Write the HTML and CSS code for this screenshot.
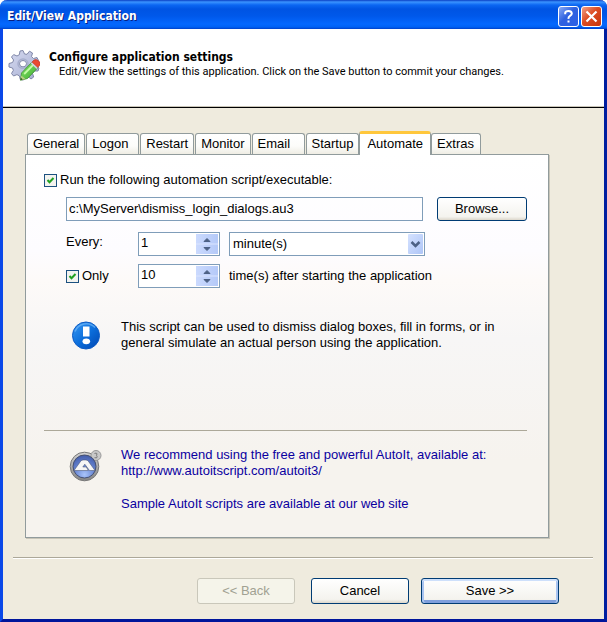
FILE: index.html
```html
<!DOCTYPE html>
<html lang="en">
<head>
<meta charset="utf-8">
<title>Edit/View Application</title>
<link rel="stylesheet" href="styles.css">
</head>
<body>
<div class="window">
  <header class="titlebar">
    <h1 class="title">Edit/View Application</h1>
    <button class="sys sys-help" type="button" aria-label="Help">
      <svg width="19" height="19" viewBox="0 0 19 19"><path d="M6.2 7.2V5.8Q6.5 4 9.5 4T12.8 6.4Q12.8 7.8 11 8.9T9.5 11.8M9.5 13.6V15.6" fill="none" stroke="#fff" stroke-width="2"/></svg>
    </button>
    <button class="sys sys-close" type="button" aria-label="Close">
      <svg width="19" height="19" viewBox="0 0 19 19"><path d="M4.5 4.5L14.5 14.5M14.5 4.5L4.5 14.5" fill="none" stroke="#fff" stroke-width="2.2"/></svg>
    </button>
  </header>

  <section class="banner">
    <svg class="banner-icon" width="32" height="32" viewBox="0 0 32 32">
      <defs>
        <linearGradient id="gear" x1="0" y1="0" x2="1" y2="1"><stop offset="0" stop-color="#d6daf0"/><stop offset="1" stop-color="#a3abd0"/></linearGradient>
        <linearGradient id="pencil" x1="0" y1="0" x2="1" y2="1"><stop offset="0" stop-color="#8eea6c"/><stop offset="1" stop-color="#37a82e"/></linearGradient>
      </defs>
      <path fill="url(#gear)" stroke="#8087a8" stroke-width="1" stroke-linejoin="round" fill-rule="evenodd" d="M12 2L15 1.500L16.500 5L19 5.300L21.500 2.200L24.500 4L23.500 7.500L25.500 9.500L29 8.500L30.500 11.500L27.500 14L28 17L31 19L30 22L26.300 22L24.500 24.500L25.700 28L23 30L20 27.500L17 28.200L15.500 31L12.300 30.500L11.500 27L9 25.600L5.600 27L3.500 24.500L5.400 21.300L4.500 19L1 18L1 14.500L4.600 13.500L5.600 11L3.500 8L5.700 5.600L9 7L11.400 5.600ZM15 11.500A3.500 3.200 0 1 0 15 17.900A3.500 3.200 0 1 0 15 11.500Z"/>
      <ellipse cx="15" cy="14.700" rx="5" ry="4.600" fill="none" stroke="#a7aecd" stroke-width="1.500"/>
      <path d="M13.500 24L24 13L30 18.500L19.500 29.500L12.500 31.200Z" fill="url(#pencil)" stroke="#3d8f30" stroke-width=".8"/>
      <path d="M16.200 25L26.200 14.800" stroke="#c4fca6" stroke-width="1.800"/>
      <path d="M13.300 26.500L17.500 30L12.500 31.200Z" fill="#b8cf80"/>
      <path d="M12.900 28.800L14.800 30.400L12.300 31.300Z" fill="#2e5a1e"/>
      <path d="M22.700 14.400L24.500 12.500L30.400 18L28.600 19.900Z" fill="#cfd0dc"/>
      <path d="M24 13L26 11Q28.500 9.800 31 12.200T31.500 16.500L29.900 18.500Z" fill="#ea4a31" stroke="#b7301e" stroke-width=".6"/>
    </svg>
    <div class="banner-text">
      <h2 class="banner-title">Configure application settings</h2>
      <p class="banner-sub">Edit/View the settings of this application. Click on the Save button to commit your changes.</p>
    </div>
  </section>

  <main class="main">
    <div class="tabs" role="tablist">
      <button class="tab" type="button" role="tab">General</button>
      <button class="tab" type="button" role="tab">Logon</button>
      <button class="tab" type="button" role="tab">Restart</button>
      <button class="tab" type="button" role="tab">Monitor</button>
      <button class="tab" type="button" role="tab">Email</button>
      <button class="tab" type="button" role="tab">Startup</button>
      <button class="tab tab-active" type="button" role="tab" aria-selected="true">Automate</button>
      <button class="tab tab-last" type="button" role="tab">Extras</button>
    </div>

    <form class="panel" role="tabpanel">
      <div class="check-row">
        <input class="check" type="checkbox" id="run" checked>
        <label for="run">Run the following automation script/executable:</label>
      </div>

      <div class="fields">
        <div class="path-row">
          <input class="field path" type="text" aria-label="Script path" value="c:\MyServer\dismiss_login_dialogs.au3">
          <button class="btn browse" type="button">Browse...</button>
        </div>
        <div class="grid">
          <label class="every" for="every">Every:</label>
          <div class="spin">
            <input class="spin-input" type="text" id="every" value="1">
            <span class="spin-btns"><svg width="22" height="20" viewBox="0 0 22 20"><path d="M8 7.500L11 4.500L14 7.500ZM8 13.500L11 16.500L14 13.500Z" fill="#4d6185" stroke="#4d6185"/><path d="M0 10H22" stroke="#dbe5fe"/></svg></span>
          </div>
          <select class="field select" aria-label="Unit"><option>minute(s)</option></select>
          <div class="check-cell">
            <input class="check" type="checkbox" id="only" checked>
            <label for="only">Only</label>
          </div>
          <div class="spin">
            <input class="spin-input" type="text" aria-label="Number of times" value="10">
            <span class="spin-btns"><svg width="22" height="20" viewBox="0 0 22 20"><path d="M8 7.500L11 4.500L14 7.500ZM8 13.500L11 16.500L14 13.500Z" fill="#4d6185" stroke="#4d6185"/><path d="M0 10H22" stroke="#dbe5fe"/></svg></span>
          </div>
          <span class="times">time(s) after starting the application</span>
        </div>
      </div>

      <div class="note">
        <svg class="note-icon" width="32" height="32" viewBox="0 0 32 32">
          <defs><linearGradient id="info" x1="0" y1="0" x2="1" y2="1"><stop offset="0" stop-color="#3a98f2"/><stop offset=".5" stop-color="#0c6fdc"/><stop offset="1" stop-color="#0045b0"/></linearGradient></defs>
          <circle cx="16" cy="16.500" r="13.500" fill="url(#info)" stroke="#0b5ac4"/>
          <path d="M5 12.500A12 12 0 0 1 25 8.500" fill="none" stroke="#7cc0fb" stroke-opacity=".6" stroke-width="1.500"/>
          <path d="M13 7.500H19.500V17.500H13Z" fill="#fff"/>
          <ellipse cx="16.300" cy="22.300" rx="3.800" ry="2.900" fill="#fff"/>
        </svg>
        <p class="note-text">This script can be used to dismiss dialog boxes, fill in forms, or in general simulate an actual person using the application.</p>
      </div>

      <div class="note links">
        <svg class="note-icon" width="36" height="36" viewBox="0 -2 36 36">
          <defs>
            <radialGradient id="orb" cx=".5" cy=".85" r=".9"><stop offset="0" stop-color="#a9c4fa"/><stop offset=".5" stop-color="#6684d2"/><stop offset="1" stop-color="#3f57a4"/></radialGradient>
            <linearGradient id="ring" x1="0" y1="0" x2="0" y2="1"><stop offset="0" stop-color="#d2d2d2"/><stop offset="1" stop-color="#858585"/></linearGradient>
          </defs>
          <circle cx="16.500" cy="17.500" r="14.300" fill="url(#ring)" stroke="#777"/>
          <circle cx="28" cy="6.500" r="5" fill="#c8c8c8" stroke="#999"/>
          <circle cx="16.500" cy="17.500" r="11.500" fill="url(#orb)" stroke="#46506f"/>
          <path d="M6.500 22L13.300 12.500Q16.500 9.500 19.700 12.500L26.500 22H21.500L16.500 15L14 18.200H18L20.500 22Z" fill="none"/>
          <path fill-rule="evenodd" d="M6 21.500L12.500 12.500Q13.500 11 15 11H18Q19.500 11 20.500 12.500L27 21.500H21.500L16.800 15.200L14.800 18H18.300L20.300 21.500Z" fill="#f6f6f6" stroke="#3d4663" stroke-width=".5"/>
          <path d="M26.500 4.500Q30 3.300 28.500 6.300Q30.500 9.500 26.500 8.700" fill="none" stroke="#777"/>
        </svg>
        <div class="note-text">
          <p class="para"><a class="link" href="#autoit">We recommend using the free and powerful AutoIt, available at:<br>http://www.autoitscript.com/autoit3/</a></p>
          <p class="para"><a class="link" href="#samples">Sample AutoIt scripts are available at our web site</a></p>
        </div>
      </div>
    </form>
  </main>

  <footer class="footer">
    <button class="btn" type="button" disabled>&lt;&lt; Back</button>
    <button class="btn cancel" type="button">Cancel</button>
    <button class="btn save" type="button">Save &gt;&gt;</button>
  </footer>
</div>
</body>
</html>
```
FILE: styles.css
```css
* {
  box-sizing: border-box;
}

body {
  margin: 0;
  background: #fff;
  color: #000;
  font: 13px/16px "Liberation Sans", Arial, sans-serif;
}

h1, h2, p {
  margin: 0;
}

button, input, select {
  font: inherit;
  color: inherit;
}

.window {
  display: flex;
  flex-direction: column;
  min-height: 100vh;
  border: solid #0831d9;
  border-width: 0 3px 3px;
  border-color: #0831d9 #001ea0 #00159b #0a48e8;
  border-radius: 7px 7px 0 0;
  background: #efebde;
}

.titlebar {
  display: flex;
  align-items: center;
  gap: 2px;
  height: 29px;
  margin: 0 -3px;
  padding: 3px 5px 0 7px;
  border-radius: 7px 7px 0 0;
  background: linear-gradient(#0a3fc4 0, #3a93ff 2px, #0b66f2 5px, #0054e3 9px, #0058ea 16px, #0468fe 24px, #0062f5 27px, #0040c8 29px);
}

.title {
  flex: 1;
  color: #fff;
  font: bold 12px/16px "DejaVu Sans Condensed", "DejaVu Sans", sans-serif;
  text-shadow: 1px 1px #0a1f80;
}

.sys {
  display: grid;
  place-items: center;
  width: 21px;
  height: 21px;
  padding: 0;
  border: 1px solid #fff;
  border-radius: 3px;
}

.sys-help {
  background: linear-gradient(135deg, #8aabf5, #2f61e0 45%, #2a5fe6);
}

.sys-close {
  background: linear-gradient(135deg, #f0a088, #dc4c22 45%, #c8350c);
}

.banner {
  display: flex;
  gap: 9px;
  height: 79px;
  padding: 20px 6px 0 5px;
  border-bottom: 1px solid #000;
  box-shadow: inset 0 -1px #c9c5b8;
  background: #fff;
}

.banner-text {
  flex: 1;
}

.banner-title {
  font: bold 12px/16px "DejaVu Sans Condensed", "DejaVu Sans", sans-serif;
}

.banner-sub {
  padding-left: 10px;
  font: 11px/14px Roboto, sans-serif;
}

.main {
  display: flex;
  flex: 1;
  flex-direction: column;
  padding: 23px 55px 0 22px;
}

.tabs {
  display: flex;
  align-items: flex-end;
  gap: 1px;
  padding-left: 2px;
}

.tab {
  min-width: 53px;
  height: 21px;
  padding: 0 5px;
  border: 1px solid #919b9c;
  border-bottom: 0;
  border-radius: 3px 3px 0 0;
  background: linear-gradient(#fff, #fcfcfa 60%, #efede4);
  text-align: left;
}

.tab-active {
  z-index: 1;
  height: 24px;
  margin: 0 -1px -1px;
  padding: 0 7px 2px;
  border-top: 3px solid #ffc73c;
  box-shadow: inset 0 1px #fff;
  background: #fff;
}

.tab-last {
  min-width: 50px;
}

.panel {
  flex: 1;
  padding: 17px 21px 20px 18px;
  border: 1px solid #919b9c;
  box-shadow: 1px 1px #c8c5b8;
  background: linear-gradient(#fff, #fdfcff 25%, #fdfaf8 33%, #f7f6f6 48%, #f6f3ee 80%, #f6f3ee);
}

.check-row,
.check-cell {
  display: flex;
  align-items: center;
  gap: 3px;
}

.check {
  appearance: none;
  width: 13px;
  height: 13px;
  margin: 0;
  border: 1px solid #1c5180;
  background: #f3f3ef url("data:image/svg+xml,%3Csvg xmlns='http://www.w3.org/2000/svg' viewBox='0 0 11 11'%3E%3Cpath d='M2.500 5L4.500 7.200L8.500 3' fill='none' stroke='%2321a121' stroke-width='2'/%3E%3C/svg%3E");
}

.fields {
  padding: 9px 0 0 22px;
}

.path-row {
  display: flex;
  gap: 14px;
}

.field {
  height: 24px;
  border: 1px solid #7f9db9;
  border-radius: 0;
  background: #fff;
}

.path {
  flex: 1;
  min-width: 0;
  padding: 0 2px 2px;
  background: transparent;
}

.grid {
  display: grid;
  grid-template-columns: 63px 82px 196px;
  column-gap: 9px;
  row-gap: 8px;
  padding-top: 11px;
}

.spin {
  display: flex;
  height: 24px;
  border: 1px solid #7f9db9;
  background: #fff;
}

.spin-input {
  flex: 1;
  width: 0;
  min-width: 0;
  padding: 0 2px 2px;
  border: 0;
  background: none;
}

.spin-btns {
  display: flex;
  margin: 1px;
  background: linear-gradient(90deg, #cbdafe, #b4c9f8);
}

.select {
  appearance: none;
  padding: 0 3px;
  background: #fff url("data:image/svg+xml,%3Csvg xmlns='http://www.w3.org/2000/svg' width='15' height='20'%3E%3ClinearGradient id='g' x2='1' y2='1'%3E%3Cstop stop-color='%23d5e2ff'/%3E%3Cstop offset='1' stop-color='%23aec5f7'/%3E%3C/linearGradient%3E%3Crect width='15' height='20' rx='1' fill='url(%23g)'/%3E%3Cpath d='M3.500 8L7.500 12L11.500 8' fill='none' stroke='%234d6185' stroke-width='2.500'/%3E%3C/svg%3E") no-repeat right 1px center;
}

.every {
  padding-top: 2px;
}

.times {
  align-self: center;
  white-space: nowrap;
}

.note {
  display: flex;
  align-items: flex-start;
  padding: 31px 0 0 26px;
}

.note-icon {
  flex: none;
}

.note-text {
  flex: 1;
  padding-left: 19px;
}

.links {
  margin-top: 79px;
  padding: 16px 0 0 24px;
  border-top: 1px solid #aca899;
}

.links .note-text {
  padding-left: 17px;
}

.para + .para {
  margin-top: 17px;
}

.link {
  color: #0a00a0;
  text-decoration: none;
}

.footer {
  display: flex;
  justify-content: flex-end;
  gap: 16px;
  margin: 19px 11px 0 10px;
  padding: 20px 34px 15px 0;
  border-top: 1px solid #aca899;
  box-shadow: inset 0 1px #fff;
}

.btn {
  width: 98px;
  height: 26px;
  padding: 0;
  border: 1px solid #003c74;
  border-radius: 3px;
  background: linear-gradient(#fff, #f4f3ee 85%, #dcd7cb);
}

.btn:disabled {
  border-color: #c9c7ba;
  background: #f5f4ea;
  color: #a1a192;
}

.browse {
  width: 90px;
  height: 24px;
}

.save {
  width: 138px;
  margin-left: -4px;
  box-shadow: inset 0 2px #cee0fb, inset 2px 0 #a9c4f0, inset -2px 0 #a9c4f0, inset 0 -3px #7f9fdc;
}
```
